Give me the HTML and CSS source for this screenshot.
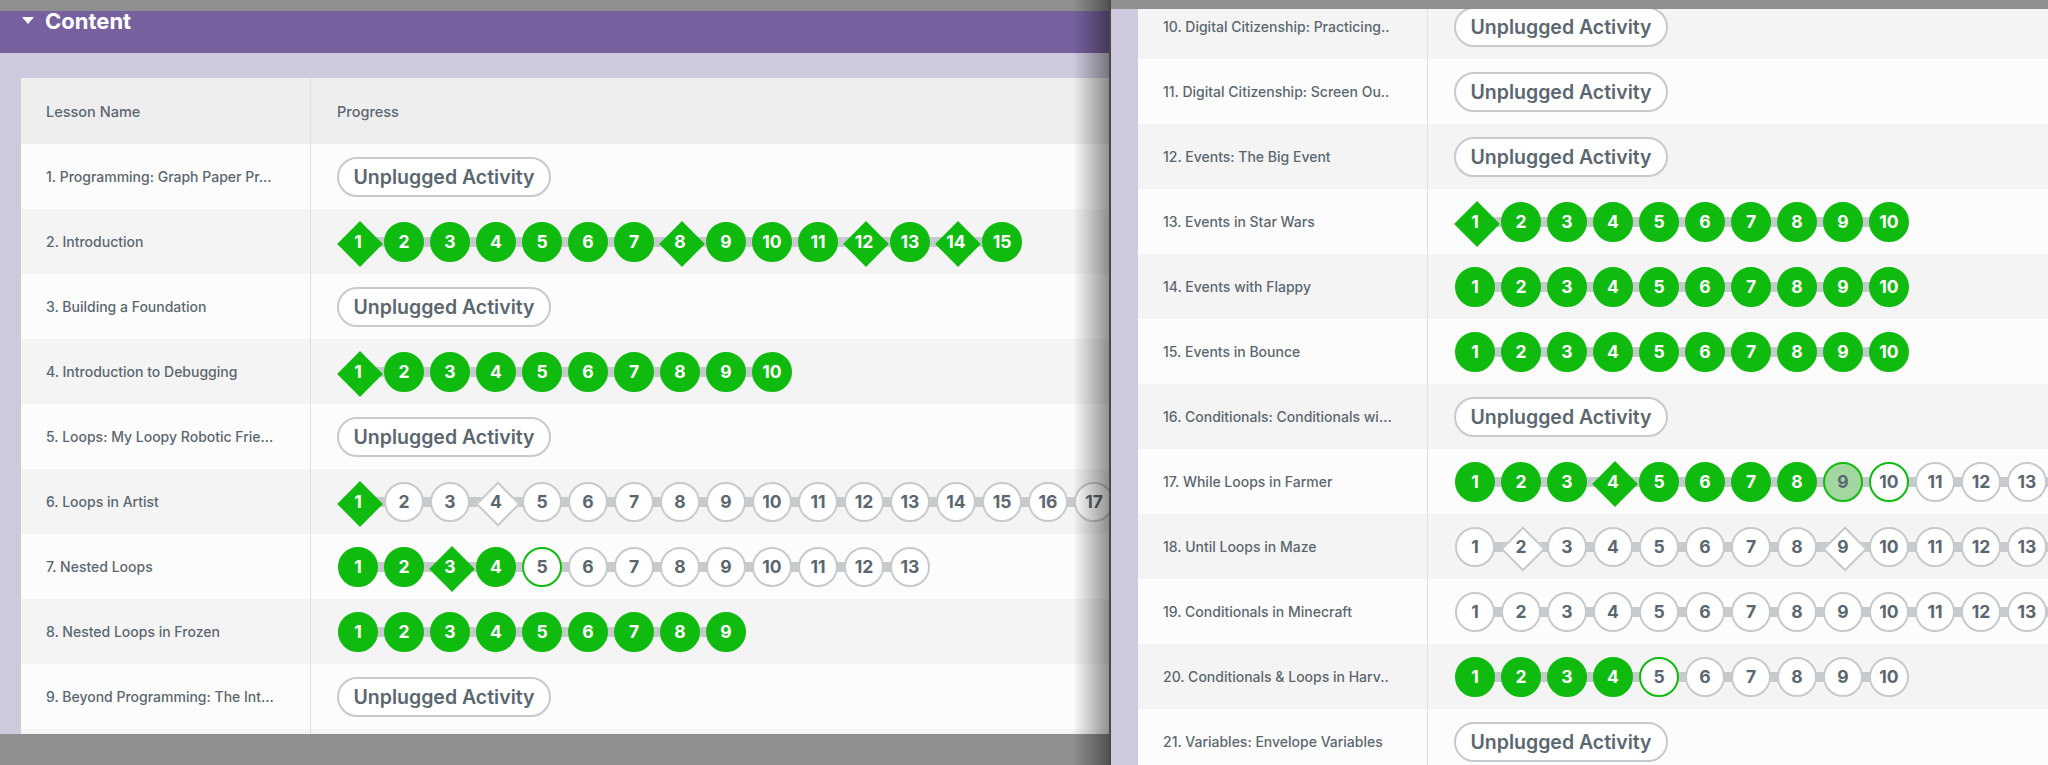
FILE: index.html
```html
<!DOCTYPE html>
<html lang="en">
<head>
<meta charset="utf-8">
<title>Content – Lesson progress</title>
<link rel="stylesheet" href="styles.css">
</head>
<body>
<div class="screen">
  <section class="win win-left">
    <div class="titlebar"></div>
    <div class="viewport">
      <div class="sec-head"><span class="caret"></span><span class="sec-title">Content</span></div>
      <div class="sec-body">
        <div class="table">
          <div class="row head"><div class="cell name">Lesson Name</div><div class="cell prog">Progress</div></div>
          <div class="row odd"><div class="cell name">1. Programming: Graph Paper Pr...</div><div class="cell prog"><span class="pill">Unplugged Activity</span></div></div>
          <div class="row even"><div class="cell name">2. Introduction</div><div class="cell prog"><div class="dots">
            <span class="b d g"><i>1</i></span><span class="b g"><i>2</i></span><span class="b g"><i>3</i></span><span class="b g"><i>4</i></span><span class="b g"><i>5</i></span><span class="b g"><i>6</i></span><span class="b g"><i>7</i></span><span class="b d g"><i>8</i></span><span class="b g"><i>9</i></span><span class="b g"><i>10</i></span><span class="b g"><i>11</i></span><span class="b d g"><i>12</i></span><span class="b g"><i>13</i></span><span class="b d g"><i>14</i></span><span class="b g"><i>15</i></span>
          </div></div></div>
          <div class="row odd"><div class="cell name">3. Building a Foundation</div><div class="cell prog"><span class="pill">Unplugged Activity</span></div></div>
          <div class="row even"><div class="cell name">4. Introduction to Debugging</div><div class="cell prog"><div class="dots">
            <span class="b d g"><i>1</i></span><span class="b g"><i>2</i></span><span class="b g"><i>3</i></span><span class="b g"><i>4</i></span><span class="b g"><i>5</i></span><span class="b g"><i>6</i></span><span class="b g"><i>7</i></span><span class="b g"><i>8</i></span><span class="b g"><i>9</i></span><span class="b g"><i>10</i></span>
          </div></div></div>
          <div class="row odd"><div class="cell name">5. Loops: My Loopy Robotic Frie...</div><div class="cell prog"><span class="pill">Unplugged Activity</span></div></div>
          <div class="row even"><div class="cell name">6. Loops in Artist</div><div class="cell prog"><div class="dots">
            <span class="b d g"><i>1</i></span><span class="b"><i>2</i></span><span class="b"><i>3</i></span><span class="b d"><i>4</i></span><span class="b"><i>5</i></span><span class="b"><i>6</i></span><span class="b"><i>7</i></span><span class="b"><i>8</i></span><span class="b"><i>9</i></span><span class="b"><i>10</i></span><span class="b"><i>11</i></span><span class="b"><i>12</i></span><span class="b"><i>13</i></span><span class="b"><i>14</i></span><span class="b"><i>15</i></span><span class="b"><i>16</i></span><span class="b"><i>17</i></span>
          </div></div></div>
          <div class="row odd"><div class="cell name">7. Nested Loops</div><div class="cell prog"><div class="dots">
            <span class="b g"><i>1</i></span><span class="b g"><i>2</i></span><span class="b d g"><i>3</i></span><span class="b g"><i>4</i></span><span class="b p"><i>5</i></span><span class="b"><i>6</i></span><span class="b"><i>7</i></span><span class="b"><i>8</i></span><span class="b"><i>9</i></span><span class="b"><i>10</i></span><span class="b"><i>11</i></span><span class="b"><i>12</i></span><span class="b"><i>13</i></span>
          </div></div></div>
          <div class="row even"><div class="cell name">8. Nested Loops in Frozen</div><div class="cell prog"><div class="dots">
            <span class="b g"><i>1</i></span><span class="b g"><i>2</i></span><span class="b g"><i>3</i></span><span class="b g"><i>4</i></span><span class="b g"><i>5</i></span><span class="b g"><i>6</i></span><span class="b g"><i>7</i></span><span class="b g"><i>8</i></span><span class="b g"><i>9</i></span>
          </div></div></div>
          <div class="row odd"><div class="cell name">9. Beyond Programming: The Int...</div><div class="cell prog"><span class="pill">Unplugged Activity</span></div></div>
          <div class="row even"><div class="cell name"></div><div class="cell prog"></div></div>
        </div>
      </div>
    </div>
    <div class="footbar"></div>
    <div class="edge-shadow"></div>
  </section>

  <section class="win win-right">
    <div class="titlebar thin"></div>
    <div class="viewport">
      <div class="sec-body side">
        <div class="table scrolled">
          <div class="row even"><div class="cell name">10. Digital Citizenship: Practicing..</div><div class="cell prog"><span class="pill">Unplugged Activity</span></div></div>
          <div class="row odd"><div class="cell name">11. Digital Citizenship: Screen Ou..</div><div class="cell prog"><span class="pill">Unplugged Activity</span></div></div>
          <div class="row even"><div class="cell name">12. Events: The Big Event</div><div class="cell prog"><span class="pill">Unplugged Activity</span></div></div>
          <div class="row odd"><div class="cell name">13. Events in Star Wars</div><div class="cell prog"><div class="dots">
            <span class="b d g"><i>1</i></span><span class="b g"><i>2</i></span><span class="b g"><i>3</i></span><span class="b g"><i>4</i></span><span class="b g"><i>5</i></span><span class="b g"><i>6</i></span><span class="b g"><i>7</i></span><span class="b g"><i>8</i></span><span class="b g"><i>9</i></span><span class="b g"><i>10</i></span>
          </div></div></div>
          <div class="row even"><div class="cell name">14. Events with Flappy</div><div class="cell prog"><div class="dots">
            <span class="b g"><i>1</i></span><span class="b g"><i>2</i></span><span class="b g"><i>3</i></span><span class="b g"><i>4</i></span><span class="b g"><i>5</i></span><span class="b g"><i>6</i></span><span class="b g"><i>7</i></span><span class="b g"><i>8</i></span><span class="b g"><i>9</i></span><span class="b g"><i>10</i></span>
          </div></div></div>
          <div class="row odd"><div class="cell name">15. Events in Bounce</div><div class="cell prog"><div class="dots">
            <span class="b g"><i>1</i></span><span class="b g"><i>2</i></span><span class="b g"><i>3</i></span><span class="b g"><i>4</i></span><span class="b g"><i>5</i></span><span class="b g"><i>6</i></span><span class="b g"><i>7</i></span><span class="b g"><i>8</i></span><span class="b g"><i>9</i></span><span class="b g"><i>10</i></span>
          </div></div></div>
          <div class="row even"><div class="cell name">16. Conditionals: Conditionals wi...</div><div class="cell prog"><span class="pill">Unplugged Activity</span></div></div>
          <div class="row odd"><div class="cell name">17. While Loops in Farmer</div><div class="cell prog"><div class="dots">
            <span class="b g"><i>1</i></span><span class="b g"><i>2</i></span><span class="b g"><i>3</i></span><span class="b d g"><i>4</i></span><span class="b g"><i>5</i></span><span class="b g"><i>6</i></span><span class="b g"><i>7</i></span><span class="b g"><i>8</i></span><span class="b h"><i>9</i></span><span class="b p"><i>10</i></span><span class="b"><i>11</i></span><span class="b"><i>12</i></span><span class="b"><i>13</i></span><span class="b"><i>14</i></span>
          </div></div></div>
          <div class="row even"><div class="cell name">18. Until Loops in Maze</div><div class="cell prog"><div class="dots">
            <span class="b"><i>1</i></span><span class="b d"><i>2</i></span><span class="b"><i>3</i></span><span class="b"><i>4</i></span><span class="b"><i>5</i></span><span class="b"><i>6</i></span><span class="b"><i>7</i></span><span class="b"><i>8</i></span><span class="b d"><i>9</i></span><span class="b"><i>10</i></span><span class="b"><i>11</i></span><span class="b"><i>12</i></span><span class="b"><i>13</i></span><span class="b"><i>14</i></span>
          </div></div></div>
          <div class="row odd"><div class="cell name">19. Conditionals in Minecraft</div><div class="cell prog"><div class="dots">
            <span class="b"><i>1</i></span><span class="b"><i>2</i></span><span class="b"><i>3</i></span><span class="b"><i>4</i></span><span class="b"><i>5</i></span><span class="b"><i>6</i></span><span class="b"><i>7</i></span><span class="b"><i>8</i></span><span class="b"><i>9</i></span><span class="b"><i>10</i></span><span class="b"><i>11</i></span><span class="b"><i>12</i></span><span class="b"><i>13</i></span><span class="b"><i>14</i></span>
          </div></div></div>
          <div class="row even"><div class="cell name">20. Conditionals &amp; Loops in Harv..</div><div class="cell prog"><div class="dots">
            <span class="b g"><i>1</i></span><span class="b g"><i>2</i></span><span class="b g"><i>3</i></span><span class="b g"><i>4</i></span><span class="b p"><i>5</i></span><span class="b"><i>6</i></span><span class="b"><i>7</i></span><span class="b"><i>8</i></span><span class="b"><i>9</i></span><span class="b"><i>10</i></span>
          </div></div></div>
          <div class="row odd"><div class="cell name">21. Variables: Envelope Variables</div><div class="cell prog"><span class="pill">Unplugged Activity</span></div></div>
        </div>
      </div>
    </div>
  </section>
</div>
</body>
</html>
```

FILE: styles.css
```css
* { box-sizing: border-box; }
html, body { margin: 0; padding: 0; }
body {
  width: 2048px;
  height: 765px;
  overflow: hidden;
  background: #8f8f8f;
  font-family: Inter, "Noto Sans", sans-serif;
  color: #5b6770;
}
.screen {
  display: flex;
  width: 2048px;
  height: 765px;
}
.win {
  position: relative;
  display: flex;
  flex-direction: column;
  overflow: hidden;
  background: #cfc9de;
}
.win-left { width: 1109px; flex: none; }
.win-right { flex: 1; border-left: 2px solid #4a4a4a; }

.titlebar { height: 11px; flex: none; background: #8f8f8f; }
.titlebar.thin { height: 9px; }
.footbar { height: 31px; flex: none; background: #8f8f8f; }

.viewport { flex: 1; overflow: hidden; }

.sec-head {
  height: 42px;
  background: #76619e;
  display: flex;
  align-items: flex-start;
  padding-left: 22px;
  color: #fff;
}
.caret {
  width: 0; height: 0;
  border-left: 6px solid transparent;
  border-right: 6px solid transparent;
  border-top: 7px solid #fff;
  margin-top: 6px;
}
.sec-title {
  font-size: 22px;
  font-weight: 700;
  line-height: 1;
  margin-left: 11px;
  margin-top: -1px;
}

.sec-body { padding: 25px 0 0 21px; }
.sec-body.side { padding: 0 0 0 27px; }
.table.scrolled { margin-top: -15px; }

.row {
  display: grid;
  grid-template-columns: 290px 1fr;
  height: 65px;
}
.row.head { height: 66px; background: #eeeeee; }
.row.odd { background: #fcfcfc; }
.row.even { background: #f4f4f4; }

.cell {
  display: flex;
  align-items: center;
  min-width: 0;
  overflow: hidden;
  white-space: nowrap;
}
.cell.name {
  padding-left: 25px;
  border-right: 1px solid #e0e0e0;
  font-size: 14px;
  font-weight: 500;
}
.row.head .cell { font-size: 14.5px; font-weight: 500; }
.cell.prog { padding-left: 26px; }

.pill {
  display: inline-flex;
  align-items: center;
  justify-content: center;
  width: 214px;
  height: 40px;
  border: 2px solid #c6cacd;
  border-radius: 20px;
  background: #fff;
  font-size: 19.5px;
  font-weight: 600;
  color: #5b6770;
}

.dots {
  position: relative;
  display: flex;
  gap: 6px;
  margin-left: 1px;
  flex: none;
}
.dots::before {
  content: "";
  position: absolute;
  left: 20px;
  right: 20px;
  top: 15px;
  height: 10px;
  background: #c6cacd;
}
.b {
  position: relative;
  flex: none;
  width: 40px;
  height: 40px;
  border-radius: 50%;
  border: 2px solid #c6cacd;
  background: #fff;
  display: flex;
  align-items: center;
  justify-content: center;
  font-size: 17.5px;
  font-weight: 700;
  color: #5b6770;
}
.b i { font-style: normal; position: relative; }
.b.g { background: #0fbb0f; border-color: #0fbb0f; color: #fff; }
.b.p { border-color: #0fbb0f; }
.b.h { background: #a2d8a0; border-color: #0fbb0f; }
.b.d { background: transparent; border: none; border-radius: 0; }
.b.d::before {
  content: "";
  position: absolute;
  left: 6px; top: 6px;
  width: 28px; height: 28px;
  transform: rotate(45deg);
  background: #fff;
  border: 2px solid #c6cacd;
}
.b.d.g::before { background: #0fbb0f; border-color: #0fbb0f; }

.edge-shadow {
  position: absolute;
  top: 0; right: 0; bottom: 0;
  width: 36px;
  background: linear-gradient(to right, rgba(0,0,0,0), rgba(0,0,0,0.42));
  pointer-events: none;
}
```
